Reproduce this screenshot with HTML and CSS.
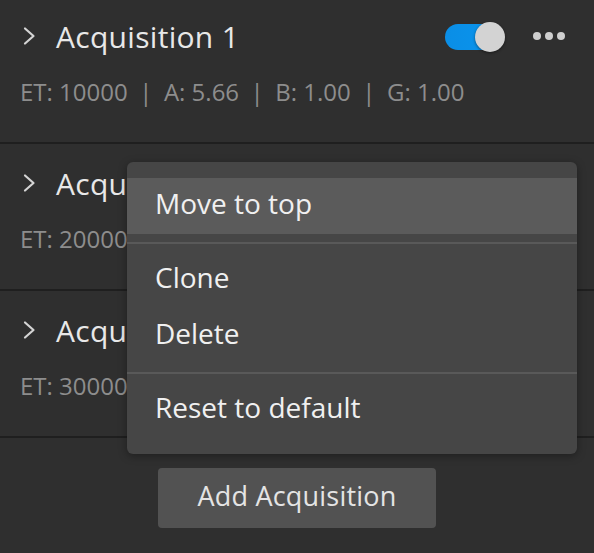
FILE: index.html
```html
<!DOCTYPE html>
<html>
<head>
<meta charset="utf-8">
<link rel="stylesheet" href="styles.css">
</head>
<body>
<div class="panel">
  <div class="list">
    <section class="acq">
      <div class="head">
        <svg class="chev" width="16" height="20" viewBox="0 0 16 20"><path d="M4 2.5 L12.5 10 L4 17.5" fill="none" stroke="#d4d4d4" stroke-width="2.2" stroke-linecap="round" stroke-linejoin="round"/></svg>
        <span class="title">Acquisition 1</span>
        <span class="spacer"></span>
        <span class="toggle"><span class="knob"></span></span>
        <span class="more"><i></i><i></i><i></i></span>
      </div>
      <div class="meta">ET: 10000<span class="bar">|</span>A: 5.66<span class="bar">|</span>B: 1.00<span class="bar">|</span>G: 1.00</div>
    </section>
    <section class="acq">
      <div class="head">
        <svg class="chev" width="16" height="20" viewBox="0 0 16 20"><path d="M4 2.5 L12.5 10 L4 17.5" fill="none" stroke="#d4d4d4" stroke-width="2.2" stroke-linecap="round" stroke-linejoin="round"/></svg>
        <span class="title">Acquisition 2</span>
      </div>
      <div class="meta">ET: 20000<span class="bar">|</span>A: 5.66<span class="bar">|</span>B: 1.00<span class="bar">|</span>G: 1.00</div>
    </section>
    <section class="acq">
      <div class="head">
        <svg class="chev" width="16" height="20" viewBox="0 0 16 20"><path d="M4 2.5 L12.5 10 L4 17.5" fill="none" stroke="#d4d4d4" stroke-width="2.2" stroke-linecap="round" stroke-linejoin="round"/></svg>
        <span class="title">Acquisition 3</span>
      </div>
      <div class="meta">ET: 30000<span class="bar">|</span>A: 5.66<span class="bar">|</span>B: 1.00<span class="bar">|</span>G: 1.00</div>
    </section>
  </div>
  <div class="actions">
    <button class="add">Add Acquisition</button>
  </div>

  <div class="menu">
    <div class="item active">Move to top</div>
    <div class="sep"></div>
    <div class="item">Clone</div>
    <div class="item">Delete</div>
    <div class="sep"></div>
    <div class="item">Reset to default</div>
  </div>
</div>
</body>
</html>
```
FILE: styles.css
```css
html, body {
  margin: 0;
  padding: 0;
  background: #2f2f2f;
  overflow: hidden;
}
body {
  width: 594px;
  height: 553px;
  font-family: "Open Sans", "Noto Sans", sans-serif;
}
.panel {
  position: relative;
  width: 594px;
  height: 553px;
  display: flex;
  flex-direction: column;
}
.list {
  margin-top: -3px;
}
.acq {
  height: 145px;
  box-sizing: content-box;
  border-bottom: 2px solid #1f1f1f;
  padding: 0 29px 0 20px;
  display: flex;
  flex-direction: column;
}
.head {
  display: flex;
  align-items: center;
  height: 40px;
  margin-top: 19px;
}
.chev {
  margin-left: 1px;
  margin-right: 19px;
  flex: none;
}
.title {
  font-size: 30px;
  color: #e8e8e8;
  letter-spacing: 0.3px;
}
.spacer { flex: 1; }
.toggle {
  position: relative;
  width: 58px;
  height: 26px;
  border-radius: 13px;
  background: linear-gradient(90deg, #0a8ee6, #0a95ee);
  margin-right: 30px;
  margin-left: 10px;
  margin-top: 1px;
}
.knob {
  position: absolute;
  right: -2px;
  top: -2px;
  width: 30px;
  height: 30px;
  border-radius: 50%;
  background: #d3d3d3;
  box-shadow: 0 1px 3px rgba(0,0,0,0.45);
}
.more {
  display: flex;
  gap: 4px;
}
.more i {
  display: block;
  width: 8px;
  height: 8px;
  border-radius: 50%;
  background: #cfcfcf;
}
.meta {
  margin-top: 21px;
  height: 30px;
  line-height: 30px;
  font-size: 24px;
  color: #8d8d8d;
  white-space: nowrap;
}
.bar {
  margin: 0 11.5px;
}
.actions {
  display: flex;
  justify-content: center;
  padding-top: 30px;
}
.add {
  width: 278px;
  height: 60px;
  border: none;
  border-radius: 4px;
  background: #525252;
  color: #e4e4e4;
  font-family: "Open Sans", "Noto Sans", sans-serif;
  font-size: 27px;
  letter-spacing: 0.2px;
  padding: 0 0 5px 0;
}
.menu {
  position: absolute;
  left: 127px;
  top: 162px;
  width: 450px;
  padding: 16px 0;
  background: #464646;
  border-radius: 6px;
  box-shadow: 0 2px 8px rgba(0,0,0,0.35);
}
.item {
  height: 56px;
  line-height: 51px;
  padding-left: 28px;
  font-size: 28px;
  color: #f0f0f0;
}
.item.active {
  background: #5b5b5b;
}
.sep {
  height: 2px;
  margin: 8px 0;
  background: #595959;
}
```
